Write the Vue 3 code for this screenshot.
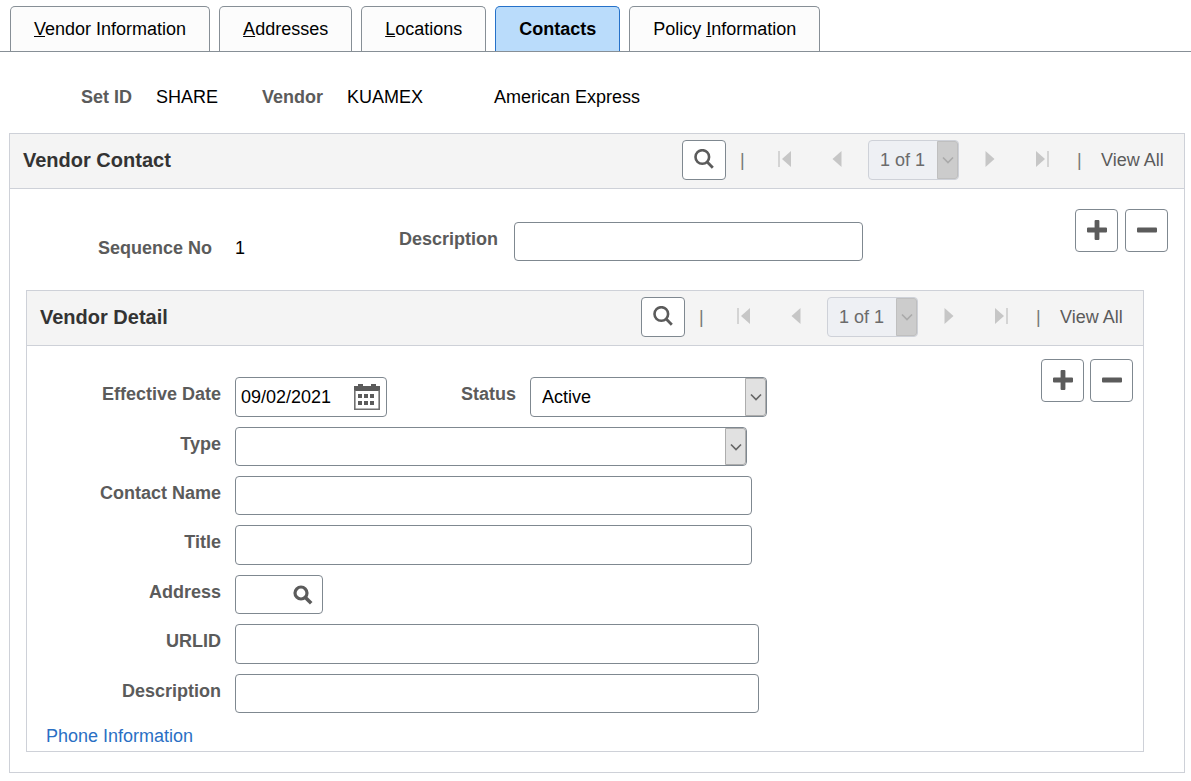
<script setup>
import { ref } from 'vue'

const tabs = [
  { before: '', key: 'V', after: 'endor Information' },
  { before: '', key: 'A', after: 'ddresses' },
  { before: '', key: 'L', after: 'ocations' },
  { before: 'Contacts', key: '', after: '', active: true },
  { before: 'Policy ', key: 'I', after: 'nformation' },
]

const seqDescription = ref('')
const effectiveDate = ref('09/02/2021')
const status = ref('Active')
const type = ref('')
const contactName = ref('')
const title = ref('')
const address = ref('')
const urlId = ref('')
const description = ref('')
</script>

<template>
  <main class="page">
    <nav class="tabs" aria-label="Vendor pages">
      <button
        v-for="(tab, i) in tabs"
        :key="i"
        type="button"
        class="tab"
        :class="{ active: tab.active }"
      >{{ tab.before }}<u v-if="tab.key">{{ tab.key }}</u>{{ tab.after }}</button>
    </nav>

    <div class="summary">
      <span class="label">Set ID</span>
      <span>SHARE</span>
      <span class="label">Vendor</span>
      <span>KUAMEX</span>
      <span>American Express</span>
    </div>

    <section class="panel outer">
      <header class="bar">
        <h2>Vendor Contact</h2>
        <div class="tools">
          <button type="button" class="box find" aria-label="Find in Vendor Contact">
            <svg width="20" height="20" viewBox="0 0 20 20"><circle cx="8.3" cy="8" r="6.8" fill="none" stroke="#5b5b5b" stroke-width="2.6" /><path d="M13 12.8L18.8 18.8" stroke="#5b5b5b" stroke-width="2.8" /></svg>
          </button>
          <span class="pipe">|</span>
          <button type="button" class="step" disabled aria-label="First row">
            <svg width="14" height="16" viewBox="0 0 14 16"><path d="M1 0V16" stroke="#c6c6c6" stroke-width="1.4" /><path d="M13 0V16L4 8Z" fill="#c6c6c6" /></svg>
          </button>
          <button type="button" class="step" disabled aria-label="Previous row">
            <svg width="10" height="16" viewBox="0 0 10 16"><path d="M9.5 0V16L0.5 8Z" fill="#c6c6c6" /></svg>
          </button>
          <span class="pick count">
            <select disabled aria-label="Vendor Contact row"><option>1 of 1</option></select>
            <span class="arrow"><svg width="12" height="8" viewBox="0 0 12 8"><path d="M1 1.5L6 6.5L11 1.5" fill="none" stroke="#aaa" stroke-width="1.7" /></svg></span>
          </span>
          <button type="button" class="step" disabled aria-label="Next row">
            <svg width="10" height="16" viewBox="0 0 10 16"><path d="M0.5 0V16L9.5 8Z" fill="#c6c6c6" /></svg>
          </button>
          <button type="button" class="step" disabled aria-label="Last row">
            <svg width="14" height="16" viewBox="0 0 14 16"><path d="M13 0V16" stroke="#c6c6c6" stroke-width="1.4" /><path d="M1 0V16L10 8Z" fill="#c6c6c6" /></svg>
          </button>
          <span class="pipe last">|</span>
          <a href="#" class="view">View All</a>
        </div>
      </header>

      <div class="sequence">
        <span class="label seq-label">Sequence No</span>
        <span class="seq-value">1</span>
        <label class="label seq-desc" for="seq-desc">Description</label>
        <input id="seq-desc" v-model="seqDescription" type="text" class="field seq-input" />
        <div class="rowtools">
          <button type="button" class="box sq" aria-label="Add contact">
            <svg width="20" height="20" viewBox="0 0 20 20"><path d="M8.6 0h2.8q1 0 1 1v6.6h6.6q1 0 1 1v2.8q0 1-1 1h-6.6v6.6q0 1-1 1H8.6q-1 0-1-1v-6.6H1q-1 0-1-1V8.6q0-1 1-1h6.6V1q0-1 1-1z" fill="#5b5b5b" /></svg>
          </button>
          <button type="button" class="box sq" aria-label="Delete contact">
            <svg width="20" height="20" viewBox="0 0 20 20"><rect y="7.5" width="20" height="5" rx="1" fill="#5b5b5b" /></svg>
          </button>
        </div>
      </div>

      <section class="panel inner">
        <header class="bar">
          <h2>Vendor Detail</h2>
          <div class="tools">
            <button type="button" class="box find" aria-label="Find in Vendor Detail">
              <svg width="20" height="20" viewBox="0 0 20 20"><circle cx="8.3" cy="8" r="6.8" fill="none" stroke="#5b5b5b" stroke-width="2.6" /><path d="M13 12.8L18.8 18.8" stroke="#5b5b5b" stroke-width="2.8" /></svg>
            </button>
            <span class="pipe">|</span>
            <button type="button" class="step" disabled aria-label="First row">
              <svg width="14" height="16" viewBox="0 0 14 16"><path d="M1 0V16" stroke="#c6c6c6" stroke-width="1.4" /><path d="M13 0V16L4 8Z" fill="#c6c6c6" /></svg>
            </button>
            <button type="button" class="step" disabled aria-label="Previous row">
              <svg width="10" height="16" viewBox="0 0 10 16"><path d="M9.5 0V16L0.5 8Z" fill="#c6c6c6" /></svg>
            </button>
            <span class="pick count">
              <select disabled aria-label="Vendor Detail row"><option>1 of 1</option></select>
              <span class="arrow"><svg width="12" height="8" viewBox="0 0 12 8"><path d="M1 1.5L6 6.5L11 1.5" fill="none" stroke="#aaa" stroke-width="1.7" /></svg></span>
            </span>
            <button type="button" class="step" disabled aria-label="Next row">
              <svg width="10" height="16" viewBox="0 0 10 16"><path d="M0.5 0V16L9.5 8Z" fill="#c6c6c6" /></svg>
            </button>
            <button type="button" class="step" disabled aria-label="Last row">
              <svg width="14" height="16" viewBox="0 0 14 16"><path d="M13 0V16" stroke="#c6c6c6" stroke-width="1.4" /><path d="M1 0V16L10 8Z" fill="#c6c6c6" /></svg>
            </button>
            <span class="pipe last">|</span>
            <a href="#" class="view">View All</a>
          </div>
        </header>

        <div class="detail">
          <form class="form" @submit.prevent>
            <div class="line tall">
              <label class="label" for="eff-date">Effective Date</label>
              <span class="combo date">
                <input id="eff-date" v-model="effectiveDate" type="text" />
                <button type="button" aria-label="Choose a date">
                  <svg width="26" height="26" viewBox="0 0 26 26"><path d="M0 2h4V0h5v2h8V0h5v2h4v5H0z" fill="#5b5b5b" /><path d="M.8 6V25.2H25.2V6" fill="none" stroke="#707070" stroke-width="1.6" /><path d="M4 10h4v4H4zM10 10h4v4h-4zM16 10h4v4h-4zM4 17h4v4H4zM10 17h4v4h-4zM16 17h4v4h-4z" fill="#5b5b5b" /></svg>
                </button>
              </span>
              <label class="label status-label" for="status">Status</label>
              <span class="pick status">
                <select id="status" v-model="status"><option>Active</option><option>Inactive</option></select>
                <span class="arrow"><svg width="12" height="8" viewBox="0 0 12 8"><path d="M1 1.5L6 6.5L11 1.5" fill="none" stroke="#666" stroke-width="1.7" /></svg></span>
              </span>
            </div>
            <div class="line">
              <label class="label" for="type">Type</label>
              <span class="pick type">
                <select id="type" v-model="type"><option value=""></option></select>
                <span class="arrow"><svg width="12" height="8" viewBox="0 0 12 8"><path d="M1 1.5L6 6.5L11 1.5" fill="none" stroke="#666" stroke-width="1.7" /></svg></span>
              </span>
            </div>
            <div class="line">
              <label class="label" for="contact-name">Contact Name</label>
              <input id="contact-name" v-model="contactName" type="text" class="field medium" />
            </div>
            <div class="line tall">
              <label class="label" for="title">Title</label>
              <input id="title" v-model="title" type="text" class="field medium" />
            </div>
            <div class="line">
              <label class="label" for="address">Address</label>
              <span class="combo address">
                <input id="address" v-model="address" type="text" />
                <button type="button" aria-label="Look up address">
                  <svg width="20" height="20" viewBox="0 0 20 20"><circle cx="8" cy="8" r="6" fill="none" stroke="#5b5b5b" stroke-width="3.2" /><path d="M12.4 12.4L18.2 18.2" stroke="#5b5b5b" stroke-width="3.6" /></svg>
                </button>
              </span>
            </div>
            <div class="line tall">
              <label class="label" for="url-id">URLID</label>
              <input id="url-id" v-model="urlId" type="text" class="field wide" />
            </div>
            <div class="line">
              <label class="label" for="description">Description</label>
              <input id="description" v-model="description" type="text" class="field wide" />
            </div>
            <a href="#" class="phone">Phone Information</a>
          </form>
          <div class="rowtools">
            <button type="button" class="box sq" aria-label="Add detail">
              <svg width="20" height="20" viewBox="0 0 20 20"><path d="M8.6 0h2.8q1 0 1 1v6.6h6.6q1 0 1 1v2.8q0 1-1 1h-6.6v6.6q0 1-1 1H8.6q-1 0-1-1v-6.6H1q-1 0-1-1V8.6q0-1 1-1h6.6V1q0-1 1-1z" fill="#5b5b5b" /></svg>
            </button>
            <button type="button" class="box sq" aria-label="Delete detail">
              <svg width="20" height="20" viewBox="0 0 20 20"><rect y="7.5" width="20" height="5" rx="1" fill="#5b5b5b" /></svg>
            </button>
          </div>
        </div>
      </section>
    </section>
  </main>
</template>

<style>
body {
  background: #fff;
}
</style>

<style scoped>
.page,
.page * {
  box-sizing: border-box;
}
.page {
  padding-bottom: 8px;
  font-family: "Liberation Sans", Arial, sans-serif;
  font-size: 18px;
  line-height: 20px;
  color: #000;
}
button,
input,
select {
  font: inherit;
  color: inherit;
  margin: 0;
}
svg {
  display: block;
  flex: none;
}
a {
  text-decoration: none;
}
.label {
  font-weight: bold;
  color: #5b5b5b;
}

.tabs {
  display: flex;
  gap: 9px;
  padding: 6px 10px 0;
  border-bottom: 1px solid #878f96;
}
.tab {
  height: 45px;
  padding: 0 23px;
  border: 1px solid #878f96;
  border-bottom: 0;
  border-radius: 5px 5px 0 0;
  background: #fcfcfc;
  white-space: nowrap;
}
.tab.active {
  background: #badcfb;
  border-color: #2571c9;
  font-weight: bold;
}

.summary {
  display: grid;
  grid-template-columns: 75px 106px 85px 147px auto;
  padding: 35px 16px 26px 81px;
}

.panel {
  border: 1px solid #ced1d8;
}
.outer {
  margin: 0 6px 0 9px;
  padding-bottom: 20px;
}
.inner {
  margin: 0 40px 0 16px;
}
.bar {
  display: flex;
  align-items: center;
  justify-content: space-between;
  padding: 6px 18px 8px 13px;
  background: #f4f4f4;
  border-bottom: 1px solid #ced1d8;
}
h2 {
  margin: 0;
  font-size: 20px;
  line-height: 24px;
  color: #333;
}
.tools {
  display: flex;
  align-items: center;
}
.box {
  display: flex;
  align-items: center;
  justify-content: center;
  padding: 0;
  border: 1px solid #7f8890;
  border-radius: 4px;
  background: #fff;
}
.find {
  width: 44px;
  height: 40px;
  padding-bottom: 2px;
}
.sq {
  width: 43px;
  height: 43px;
  padding-bottom: 2px;
}
.pipe {
  width: 5px;
  margin: 0 14px;
  color: #777;
}
.pipe.last {
  margin: 0 19px 0 9px;
}
.step {
  display: flex;
  justify-content: center;
  width: 52px;
  padding: 0 0 3px;
  border: 0;
  background: none;
}
.view {
  min-width: 65px;
  color: #5b5b5b;
  white-space: nowrap;
}

.pick {
  position: relative;
  display: block;
  height: 100%;
}
.pick select {
  width: 100%;
  height: 100%;
  padding: 0 24px 0 11px;
  border: 1px solid #7f8890;
  border-radius: 4px;
  background: #fff;
  appearance: none;
}
.arrow {
  position: absolute;
  top: 1px;
  right: 1px;
  bottom: 1px;
  width: 21px;
  display: flex;
  align-items: center;
  justify-content: center;
  border: 1px solid #adadad;
  border-radius: 0 3px 3px 0;
  background: #e1e1e1;
  pointer-events: none;
}
.count {
  width: 91px;
  height: 40px;
  margin: 0 5px;
}
.count select {
  border-color: #ced1d8;
  background: #eef0f4;
  color: #6b6b6b;
  opacity: 1;
}
.count .arrow {
  border-color: #bfbfbf;
  background: #ccc;
}

.sequence {
  display: grid;
  grid-template-columns: 186px 187px 115px 349px 1fr;
  align-items: start;
  padding: 20px 16px 0;
  margin-bottom: 29px;
}
.seq-label {
  margin-top: 29px;
  text-align: right;
}
.seq-value {
  margin-top: 29px;
  padding-left: 23px;
}
.seq-desc {
  margin-top: 20px;
}
.seq-input {
  margin-top: 13px;
}
.rowtools {
  display: flex;
  gap: 6px;
  justify-content: flex-end;
}
.sequence .rowtools {
  gap: 7px;
}

.field {
  width: 100%;
  height: 39px;
  padding: 0 5px;
  border: 1px solid #7f8890;
  border-radius: 4px;
  background: #fff;
}
.detail {
  display: flex;
  align-items: flex-start;
  justify-content: space-between;
  padding: 13px 10px 5px 19px;
}
.form {
  display: flex;
  flex-direction: column;
  gap: 10px;
  padding-top: 18px;
}
.line {
  display: flex;
  align-items: center;
  height: 39px;
}
.line.tall {
  height: 40px;
}
.line .field {
  height: 100%;
}
.line .label {
  width: 175px;
  margin-right: 14px;
  padding-bottom: 6px;
  text-align: right;
}
.line .status-label {
  width: 129px;
}
.combo {
  display: flex;
  align-items: center;
  height: 100%;
  padding: 0 6px 0 5px;
  border: 1px solid #7f8890;
  border-radius: 4px;
  background: #fff;
}
.combo input {
  flex: 1;
  min-width: 0;
  padding: 0;
  border: 0;
  background: none;
}
.combo button {
  padding: 0;
  border: 0;
  background: none;
}
.date {
  width: 152px;
}
.address {
  width: 88px;
  padding-right: 9px;
}
.status {
  width: 237px;
}
.type {
  width: 512px;
}
.medium {
  width: 517px;
}
.wide {
  width: 524px;
}
.phone {
  align-self: flex-start;
  margin-top: 3px;
  color: #2a6fc4;
}
</style>
